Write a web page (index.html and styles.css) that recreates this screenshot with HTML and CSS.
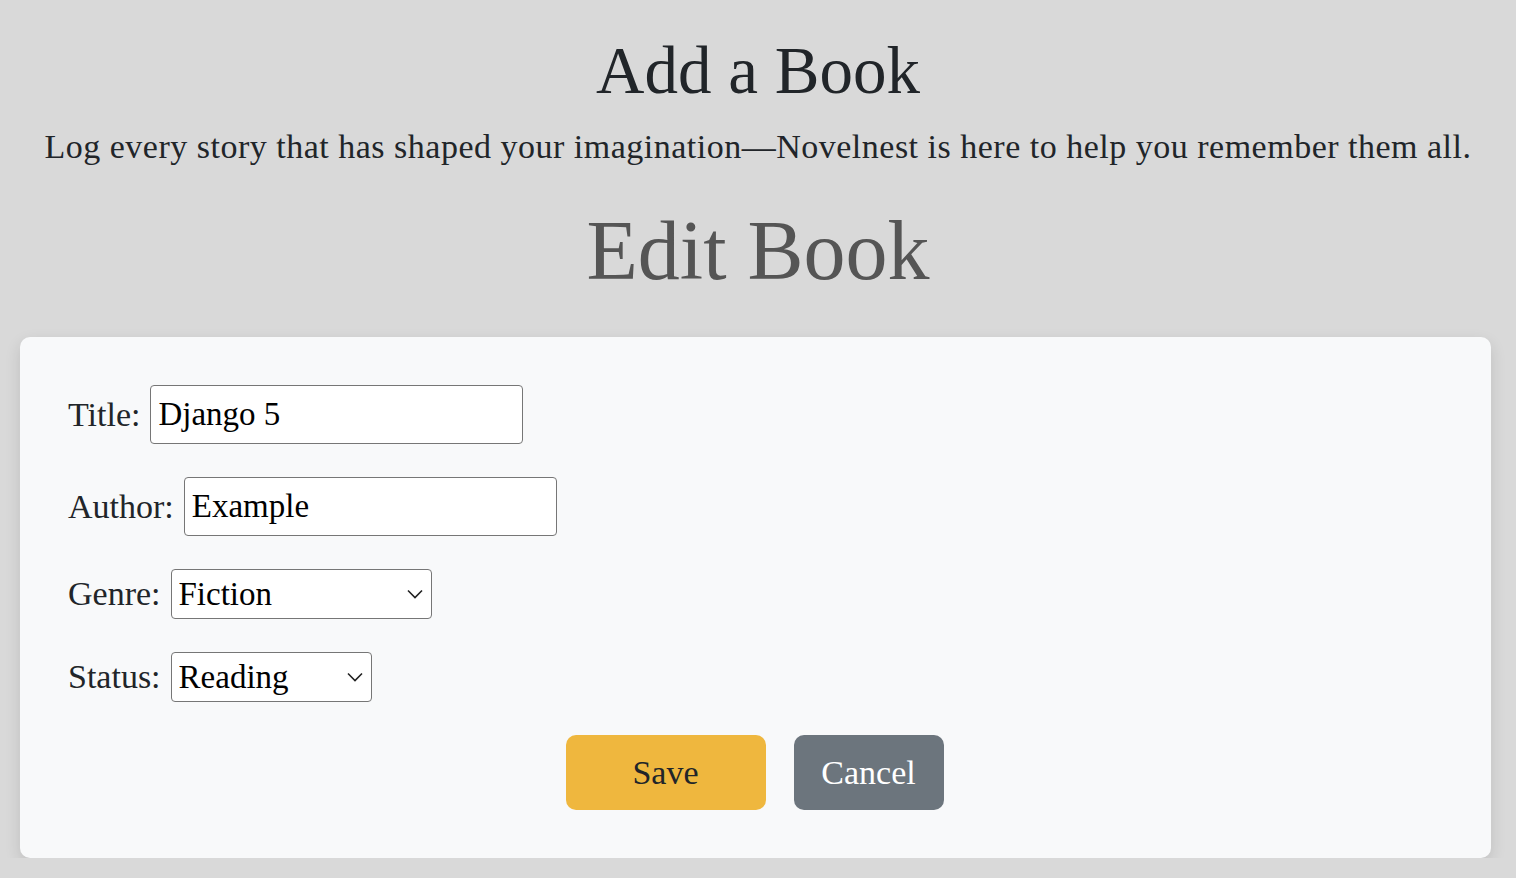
FILE: index.html
```html
<!DOCTYPE html>
<html lang="en">
<head>
<meta charset="utf-8">
<title>Add a Book</title>
<link rel="stylesheet" href="styles.css">
</head>
<body>
<header class="intro">
  <h1 class="page-title">Add a Book</h1>
  <p class="lead">Log every story that has shaped your imagination—Novelnest is here to help you remember them all.</p>
  <h2 class="edit-title">Edit Book</h2>
</header>
<form class="card">
  <div class="field">
    <label for="title">Title:</label>
    <input id="title" class="text-input" type="text" value="Django 5">
  </div>
  <div class="field">
    <label for="author">Author:</label>
    <input id="author" class="text-input" type="text" value="Example">
  </div>
  <div class="field">
    <label for="genre">Genre:</label>
    <select id="genre" class="select select-genre">
      <option>Fiction</option>
      <option>Non-fiction</option>
      <option>Mystery</option>
    </select>
  </div>
  <div class="field">
    <label for="status">Status:</label>
    <select id="status" class="select select-status">
      <option>Reading</option>
      <option>Finished</option>
      <option>Wishlist</option>
    </select>
  </div>
  <div class="actions">
    <button type="button" class="btn btn-save">Save</button>
    <button type="button" class="btn btn-cancel">Cancel</button>
  </div>
</form>
</body>
</html>
```

FILE: styles.css
```css
html, body {
  margin: 0;
  padding: 0;
}
body {
  background: #d9d9d9;
  color: #212529;
  font-family: "Liberation Serif", "Times New Roman", serif;
  overflow: hidden;
}
.intro {
  text-align: center;
}
.page-title {
  margin: 0;
  padding-top: 30px;
  font-size: 67px;
  font-weight: 400;
  line-height: 80px;
}
.lead {
  margin: 2px 0 0;
  font-size: 34px;
  letter-spacing: 0.5px;
  line-height: 70px;
  color: #212529;
}
.edit-title {
  margin: 14px 0 0;
  font-size: 84px;
  font-weight: 400;
  line-height: 110px;
  color: #555555;
}
.card {
  margin: 31px 25px 0 20px;
  background: #f8f9fa;
  border-radius: 10px;
  padding: 48px;
  box-shadow: 0 6px 16px rgba(0, 0, 0, 0.12);
  display: flex;
  flex-direction: column;
  gap: 33px;
}
.field {
  display: flex;
  align-items: center;
  gap: 10px;
  font-size: 34px;
  color: #212529;
}
.text-input,
.select {
  box-sizing: border-box;
  font-family: inherit;
  font-size: 33px;
  color: #000;
  background-color: #fff;
  border: 1.5px solid #767676;
  border-radius: 4px;
  margin: 0;
  outline: none;
}
.text-input {
  width: 373px;
  height: 59px;
  padding: 0 7px;
}
.select {
  appearance: none;
  -webkit-appearance: none;
  height: 50px;
  padding: 0 30px 0 7px;
  background-image: url("data:image/svg+xml;utf8,<svg xmlns='http://www.w3.org/2000/svg' width='16' height='10' viewBox='0 0 16 10'><path d='M1 1.5 L8 8.5 L15 1.5' fill='none' stroke='%23222' stroke-width='1.6'/></svg>");
  background-repeat: no-repeat;
  background-position: right 8px center;
  background-size: 16px 10px;
}
.select-genre {
  width: 261px;
}
.select-status {
  width: 201px;
}
.actions {
  display: flex;
  justify-content: center;
  gap: 28px;
  padding-right: 2px;
}
.btn {
  height: 75px;
  border: none;
  border-radius: 10px;
  font-family: inherit;
  font-size: 34px;
  cursor: pointer;
}
.btn-save {
  width: 200px;
  background: #efb73e;
  color: #212529;
}
.btn-cancel {
  width: 150px;
  background: #6c757d;
  color: #fff;
}
```
